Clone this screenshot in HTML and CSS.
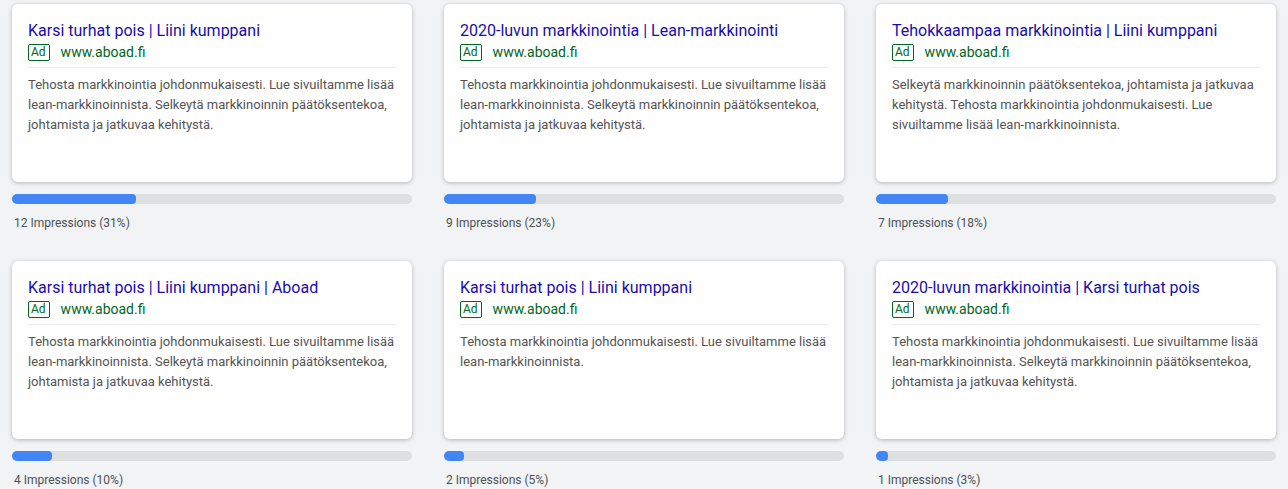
FILE: index.html
```html
<!DOCTYPE html>
<html lang="en">
<head>
    <meta charset="UTF-8">
    <meta name="viewport" content="width=device-width, initial-scale=1.0">
    <title>Ad previews</title>
    <link rel="stylesheet" href="styles.css">
</head>
<body>
    <div class="ad-grid">
        <!-- Row 1 -->
        <div class="ad-item">
            <div class="ad-card">
                <div class="ad-title">Karsi turhat pois | Liini kumppani</div>
                <div class="ad-url-row"><span class="ad-badge">Ad</span><span class="ad-url">www.aboad.fi</span></div>
                <p class="ad-desc">Tehosta markkinointia johdonmukaisesti. Lue sivuiltamme lisää lean-markkinoinnista. Selkeytä markkinoinnin päätöksentekoa, johtamista ja jatkuvaa kehitystä.</p>
            </div>
            <div class="bar"><div class="bar-fill" style="width: 31%"></div></div>
            <div class="impressions">12 Impressions (31%)</div>
        </div>

        <div class="ad-item">
            <div class="ad-card">
                <div class="ad-title">2020-luvun markkinointia | Lean-markkinointi</div>
                <div class="ad-url-row"><span class="ad-badge">Ad</span><span class="ad-url">www.aboad.fi</span></div>
                <p class="ad-desc">Tehosta markkinointia johdonmukaisesti. Lue sivuiltamme lisää lean-markkinoinnista. Selkeytä markkinoinnin päätöksentekoa, johtamista ja jatkuvaa kehitystä.</p>
            </div>
            <div class="bar"><div class="bar-fill" style="width: 23%"></div></div>
            <div class="impressions">9 Impressions (23%)</div>
        </div>

        <div class="ad-item">
            <div class="ad-card">
                <div class="ad-title">Tehokkaampaa markkinointia | Liini kumppani</div>
                <div class="ad-url-row"><span class="ad-badge">Ad</span><span class="ad-url">www.aboad.fi</span></div>
                <p class="ad-desc">Selkeytä markkinoinnin päätöksentekoa, johtamista ja jatkuvaa kehitystä. Tehosta markkinointia johdonmukaisesti. Lue sivuiltamme lisää lean-markkinoinnista.</p>
            </div>
            <div class="bar"><div class="bar-fill" style="width: 18%"></div></div>
            <div class="impressions">7 Impressions (18%)</div>
        </div>

        <!-- Row 2 -->
        <div class="ad-item">
            <div class="ad-card">
                <div class="ad-title">Karsi turhat pois | Liini kumppani | Aboad</div>
                <div class="ad-url-row"><span class="ad-badge">Ad</span><span class="ad-url">www.aboad.fi</span></div>
                <p class="ad-desc">Tehosta markkinointia johdonmukaisesti. Lue sivuiltamme lisää lean-markkinoinnista. Selkeytä markkinoinnin päätöksentekoa, johtamista ja jatkuvaa kehitystä.</p>
            </div>
            <div class="bar"><div class="bar-fill" style="width: 10%"></div></div>
            <div class="impressions">4 Impressions (10%)</div>
        </div>

        <div class="ad-item">
            <div class="ad-card">
                <div class="ad-title">Karsi turhat pois | Liini kumppani</div>
                <div class="ad-url-row"><span class="ad-badge">Ad</span><span class="ad-url">www.aboad.fi</span></div>
                <p class="ad-desc">Tehosta markkinointia johdonmukaisesti. Lue sivuiltamme lisää lean-markkinoinnista.</p>
            </div>
            <div class="bar"><div class="bar-fill" style="width: 5%"></div></div>
            <div class="impressions">2 Impressions (5%)</div>
        </div>

        <div class="ad-item">
            <div class="ad-card">
                <div class="ad-title">2020-luvun markkinointia | Karsi turhat pois</div>
                <div class="ad-url-row"><span class="ad-badge">Ad</span><span class="ad-url">www.aboad.fi</span></div>
                <p class="ad-desc">Tehosta markkinointia johdonmukaisesti. Lue sivuiltamme lisää lean-markkinoinnista. Selkeytä markkinoinnin päätöksentekoa, johtamista ja jatkuvaa kehitystä.</p>
            </div>
            <div class="bar"><div class="bar-fill" style="width: 3%"></div></div>
            <div class="impressions">1 Impressions (3%)</div>
        </div>
    </div>
</body>
</html>
```

FILE: styles.css
```css
body {
    margin: 0;
    padding: 4px 12px 0;
    font-family: Roboto, Arial, sans-serif;
    background-color: #f1f3f4;
}
.ad-grid {
    display: grid;
    grid-template-columns: repeat(3, 400px);
    column-gap: 32px;
    row-gap: 30px;
}
.ad-card {
    box-sizing: border-box;
    height: 178px;
    padding: 17px 16px 0;
    background-color: #fff;
    border-radius: 6px;
    box-shadow: 0 1px 4px rgba(60, 64, 67, 0.35);
}
.ad-title {
    font-size: 16px;
    line-height: 20px;
    color: #1a0dab;
    white-space: nowrap;
}
.ad-url-row {
    display: flex;
    align-items: center;
    height: 20px;
    margin-top: 1px;
    padding-bottom: 5px;
    border-bottom: 1px solid #ebebeb;
}
.ad-badge {
    box-sizing: border-box;
    height: 17px;
    padding: 0 3px 0 2px;
    margin-right: 11px;
    border: 1px solid #006621;
    border-radius: 2px;
    font-size: 12px;
    line-height: 15px;
    color: #006621;
}
.ad-url {
    font-size: 14px;
    color: #006621;
}
.ad-desc {
    margin: 7px 0 0;
    font-size: 13px;
    line-height: 20px;
    color: #545454;
}
.bar {
    height: 10px;
    margin-top: 12px;
    background-color: #dedfe0;
    border-radius: 5px;
    overflow: hidden;
}
.bar-fill {
    height: 100%;
    background-color: #4285f4;
    border-radius: 0 4px 4px 0;
}
.impressions {
    margin-top: 11px;
    padding-left: 2px;
    font-size: 12px;
    line-height: 16px;
    color: #4d5156;
}
```
